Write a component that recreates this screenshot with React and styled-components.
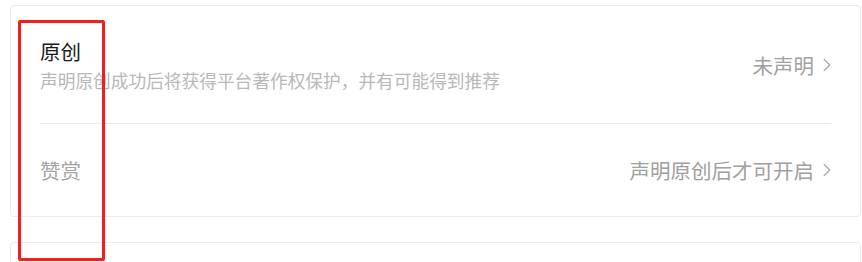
import React from 'react';
import styled, { createGlobalStyle } from 'styled-components';

const GlobalStyle = createGlobalStyle`
  html, body {
    margin: 0;
    padding: 0;
    background: #fff;
  }
  body {
    font-family: 'Noto Sans CJK SC', 'Noto Sans', sans-serif;
    -webkit-font-smoothing: antialiased;
  }
`;

const Page = styled.div`
  position: relative;
  width: 862px;
  height: 262px;
  overflow: hidden;
  padding: 5px 1px 0 10px;
  box-sizing: border-box;
`;

const Card = styled.div`
  border: 1px solid #ebebeb;
  border-radius: 4px;
  background: #fff;
  padding: 0 29px;
  margin-bottom: ${(p) => p.$gap || 0}px;
  min-height: ${(p) => p.$minHeight || 0}px;
`;

const Row = styled.div`
  display: flex;
  align-items: center;
  justify-content: space-between;
  box-sizing: border-box;
  height: ${(p) => p.$height}px;
  border-bottom: ${(p) => (p.$divider ? '1px solid #ebebeb' : 'none')};
`;

const Info = styled.div`
  display: flex;
  flex-direction: column;
`;

const Title = styled.div`
  font-size: 20.5px;
  line-height: 28px;
  color: ${(p) => (p.$muted ? '#a3a3a3' : '#1a1a1a')};
`;

const Desc = styled.div`
  margin-top: 2px;
  font-size: 17.7px;
  line-height: 26px;
  color: #b8b8b8;
`;

const Action = styled.div`
  display: flex;
  align-items: center;
  gap: 9px;
  font-size: 20.5px;
  line-height: 28px;
  color: #a0a0a0;
  cursor: pointer;
`;

const Chevron = () => (
  <svg width="8" height="14" viewBox="0 0 8 14" fill="none">
    <path d="M1.2 1.5 L6.8 7 L1.2 12.5" stroke="#ababab" strokeWidth="1.3" strokeLinecap="round" strokeLinejoin="round" />
  </svg>
);

const Highlight = styled.div`
  position: absolute;
  left: 18px;
  top: 20px;
  width: 87px;
  height: 241px;
  box-sizing: border-box;
  border: 3px solid #f0201c;
  border-radius: 2px;
  pointer-events: none;
`;

const items = [
  { key: 'original', title: '原创', desc: '声明原创成功后将获得平台著作权保护，并有可能得到推荐', value: '未声明', height: 118 },
  { key: 'reward', title: '赞赏', value: '声明原创后才可开启', height: 92, muted: true },
];

export default function App() {
  return (
    <>
      <GlobalStyle />
      <Page>
        <Card $gap={25}>
          {items.map((item, i) => (
            <Row key={item.key} $height={item.height} $divider={i < items.length - 1}>
              <Info>
                <Title $muted={item.muted}>{item.title}</Title>
                {item.desc && <Desc>{item.desc}</Desc>}
              </Info>
              <Action>
                {item.value}
                <Chevron />
              </Action>
            </Row>
          ))}
        </Card>
        <Card $minHeight={60} />
        <Highlight />
      </Page>
    </>
  );
}
